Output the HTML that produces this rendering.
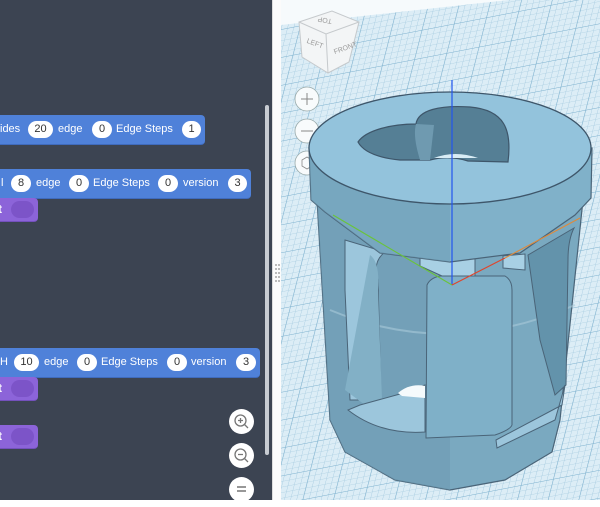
<!DOCTYPE html>
<html><head><style>
*{margin:0;padding:0;box-sizing:border-box}
body{width:600px;height:500px;overflow:hidden;position:relative;font-family:"Liberation Sans",Arial,sans-serif;background:#fff}
#left{position:absolute;left:0;top:0;width:272px;height:500px;background:#3c4452}
.blk{position:absolute;left:0;height:30px;background:#4f81d9;border-radius:0 4px 4px 0;color:#fff;font-size:11px;border-bottom:1px solid #3f6bbd}
.blk span{position:absolute;top:8px;white-space:nowrap}
.pill{position:absolute;top:6px;height:17px;background:#fff;color:#333;border-radius:9px;text-align:center;font-size:11px;line-height:17px}
.pur{position:absolute;left:0;width:38px;height:24px;background:#8c64d9;border-radius:0 4px 4px 0;border-bottom:1px solid #7451bd}
.pur i{position:absolute;left:11px;top:3px;width:23px;height:17px;border-radius:9px;background:#7c54c8}
.pur b{position:absolute;left:-2px;top:4px;color:#fff;font-size:12px}
.zb{position:absolute;left:229px;width:25px;height:25px;border-radius:50%;background:#fff}
#scroll{position:absolute;left:265px;top:105px;width:4px;height:350px;background:#c8ccd2;border-radius:2px}
#div{position:absolute;left:272px;top:0;width:9px;height:500px;background:#fbfbfb;border-left:1px solid #ddd}
</style></head><body>
<div id="left">
  <div class="blk" style="top:115px;width:205px"><span style="left:0">ides</span><div class="pill" style="left:28px;width:25px">20</div><span style="left:58px">edge</span><div class="pill" style="left:92px;width:20px">0</div><span style="left:116px">Edge Steps</span><div class="pill" style="left:182px;width:19px">1</div></div>
  <div class="blk" style="top:169px;width:251px"><span style="left:1px">l</span><div class="pill" style="left:11px;width:20px">8</div><span style="left:36px">edge</span><div class="pill" style="left:69px;width:20px">0</div><span style="left:93px">Edge Steps</span><div class="pill" style="left:158px;width:20px">0</div><span style="left:183px">version</span><div class="pill" style="left:228px;width:19px">3</div></div>
  <div class="pur" style="top:198px"><b>t</b><i></i></div>
  <div class="blk" style="top:348px;width:260px"><span style="left:0">H</span><div class="pill" style="left:14px;width:25px">10</div><span style="left:44px">edge</span><div class="pill" style="left:77px;width:20px">0</div><span style="left:101px">Edge Steps</span><div class="pill" style="left:167px;width:20px">0</div><span style="left:191px">version</span><div class="pill" style="left:236px;width:20px">3</div></div>
  <div class="pur" style="top:377px"><b>t</b><i></i></div>
  <div class="pur" style="top:425px"><b>t</b><i></i></div>
  <div class="zb" style="top:409px"><svg width="25" height="25"><circle cx="11.5" cy="11.5" r="5.5" fill="none" stroke="#777" stroke-width="1.3"/><path d="M15.5 15.5L19 19M9 11.5h5M11.5 9v5" stroke="#777" stroke-width="1.3"/></svg></div>
  <div class="zb" style="top:443px"><svg width="25" height="25"><circle cx="11.5" cy="11.5" r="5.5" fill="none" stroke="#777" stroke-width="1.3"/><path d="M15.5 15.5L19 19M9 11.5h5" stroke="#777" stroke-width="1.3"/></svg></div>
  <div class="zb" style="top:477px"><svg width="25" height="25"><path d="M8 10h9M8 14h9" stroke="#777" stroke-width="1.5"/></svg></div>
  <div id="scroll"></div>
</div>
<div id="div"><svg width="9" height="500"><g fill="#bbb"><rect x="2" y="264" width="2" height="2"/><rect x="5" y="264" width="2" height="2"/><rect x="2" y="268" width="2" height="2"/><rect x="5" y="268" width="2" height="2"/><rect x="2" y="272" width="2" height="2"/><rect x="5" y="272" width="2" height="2"/><rect x="2" y="276" width="2" height="2"/><rect x="5" y="276" width="2" height="2"/><rect x="2" y="280" width="2" height="2"/><rect x="5" y="280" width="2" height="2"/></g></svg></div>
<svg style="position:absolute;left:281px;top:0" width="319" height="500" viewBox="281 0 319 500">
  <defs>
    <pattern id="g" width="6" height="6" patternUnits="userSpaceOnUse" patternTransform="skewX(-25) rotate(-12)">
      <path d="M0 0H6M0 0V6" stroke="#a6cbe0" stroke-width="0.8"/>
    </pattern>
    <pattern id="G" width="30" height="30" patternUnits="userSpaceOnUse" patternTransform="skewX(-25) rotate(-12)">
      <path d="M0 0H30M0 0V30" stroke="#7fb2cf" stroke-width="1.1"/>
    </pattern>
  </defs>
  <rect x="281" y="0" width="319" height="500" fill="#f6fafc"/>
  <path d="M281 25 L600 -10 L600 500 L281 500Z" fill="#dcedf6"/>
  <path d="M281 25 L600 -10 L600 500 L281 500Z" fill="url(#g)"/>
  <path d="M281 25 L600 -10 L600 500 L281 500Z" fill="url(#G)"/>
  <!-- nav cube -->
  <path d="M299 22 L332 11 L359 22 L349 62 L328 73 L302 57Z" fill="#f3f5f6" stroke="#c5c9cc"/>
  <path d="M299 22 L326 34 L359 22 M326 34 L328 73" stroke="#c5c9cc" fill="none"/>
  <text x="318" y="22" font-size="7" fill="#999" transform="rotate(190 325 20)">TOP</text>
  <text x="306" y="44" font-size="7" fill="#999" transform="rotate(20 310 44)">LEFT</text>
  <text x="333" y="52" font-size="7" fill="#999" transform="rotate(-20 340 48)">FRONT</text>
  <g fill="#f8fbfc" stroke="#9aa" stroke-width="0.8">
    <circle cx="307" cy="99" r="12"/><circle cx="307" cy="131" r="12"/><circle cx="307" cy="163" r="12"/>
  </g>
  <path d="M301 99h12M307 93v12M301 131h12" stroke="#888" stroke-width="1"/>
  <path d="M302 160l5-3 5 3v6l-5 3-5-3z" fill="none" stroke="#888" stroke-width="0.8"/>
  <!-- body -->
  <path d="M317 200 L330 420 L345 452 L395 480 L450 490 L505 480 L552 452 L560 420 L583 200Z" fill="#7aa9c0" stroke="#4a6478" stroke-width="1.2"/>
  <path d="M317 200 L330 420 L345 452 L395 480 L450 490 L450 260 L380 253Z" fill="#6e9bb2" opacity="0.6"/>
  <path d="M330 310 Q450 360 575 305" fill="none" stroke="#a8c9d9" stroke-width="2" opacity="0.6"/>
  <!-- slots -->
  <path d="M345 240 L385 252 Q372 262 378 280 L381 400 L350 400 L345 290Z" fill="#9cc6dc" stroke="#4a6478"/>
  <path d="M370 255 Q380 262 378 290 L382 400 Q380 410 365 405 L345 390 Z" fill="#82b0c6"/>
  <path d="M348 410 Q380 435 425 432 L425 385 L400 394 L360 405 Z" fill="#9cc6dc" stroke="#4a6478"/>
  <path d="M427 285 Q430 278 440 276 L505 276 Q512 280 512 290 L512 425 Q510 430 495 435 L426 438Z" fill="#7fb0c8" stroke="#4a6478"/>
  <path d="M528 255 L574 228 Q568 240 568 260 L566 385 L555 395 L540 340Z" fill="#6393ab" stroke="#4a6478"/>
  <path d="M496 440 L562 405 L565 385 L555 420 L497 448Z" fill="#9cc6dc" stroke="#4a6478"/>
  <path d="M420 253 L475 252 L475 276 L442 276 L420 266Z" fill="#a8d0e4" stroke="#4a6478"/>
  <path d="M503 256 L525 254 L525 270 L503 268Z" fill="#a8d0e4" stroke="#4a6478"/>
  <path d="M398 393 Q410 383 425 386 L425 398 L402 396Z" fill="#f5fafc"/>
  <!-- ring side -->
  <path d="M309 148 L311 200 L325 212 L380 253 L450 262 L520 253 L575 215 L591 198 L592 148Z" fill="#80b1c9" stroke="#4a6478" stroke-width="1.2"/>
  <path d="M309 148 L311 200 L325 212 L380 253 L450 262 L450 200 L360 185Z" fill="#6f9eb6" opacity="0.55"/>
  <!-- top face -->
  <ellipse cx="450" cy="148" rx="141" ry="56" fill="#93c3dc" stroke="#3e566a" stroke-width="1.3"/>
  <!-- heart -->
  <path d="M358 142 C366 130 392 124 416 124 C418 110 440 105 470 107 C505 110 512 130 508 162 L468 161 C455 157 442 157 430 160 L400 160 C380 158 364 153 358 142Z" fill="#557f95" stroke="#3e566a" stroke-width="1.2"/>
  <path d="M416 124 C413 135 417 150 420 160 L430 160 L434 125Z" fill="#6f9ab0"/>
  <path d="M434 158 Q455 150 478 158Z" fill="#d8ecf5"/>
  <!-- axes -->
  <path d="M452 80 L452 285" stroke="#2255ee" stroke-width="1.2"/>
  <path d="M333 215 L452 285" stroke="#6ac43a" stroke-width="1.1"/>
  <path d="M452 285 L505 258" stroke="#e0442a" stroke-width="1.1"/>
  <path d="M505 258 L580 218" stroke="#e08a3a" stroke-width="1.1"/>
</svg>
</body></html>
